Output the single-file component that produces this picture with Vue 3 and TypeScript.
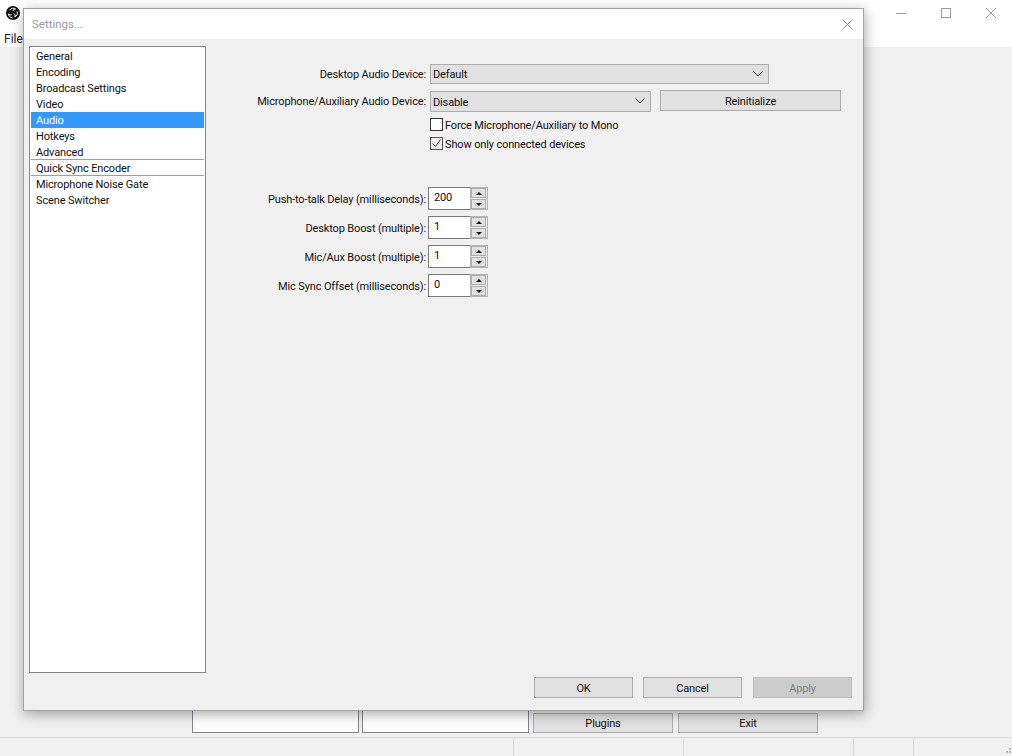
<script setup lang="ts">
const sections: { name: string; selected?: boolean; divider?: boolean }[] = [
  { name: 'General' },
  { name: 'Encoding' },
  { name: 'Broadcast Settings' },
  { name: 'Video' },
  { name: 'Audio', selected: true },
  { name: 'Hotkeys' },
  { name: 'Advanced', divider: true },
  { name: 'Quick Sync Encoder', divider: true },
  { name: 'Microphone Noise Gate' },
  { name: 'Scene Switcher' },
]
const spins = [
  { label: 'Push-to-talk Delay (milliseconds):', value: '200' },
  { label: 'Desktop Boost (multiple):', value: '1' },
  { label: 'Mic/Aux Boost (multiple):', value: '1' },
  { label: 'Mic Sync Offset (milliseconds):', value: '0' },
]
</script>

<template>
  <div class="window">
    <header class="main-head">
      <div class="titlebar">
        <svg class="logo" viewBox="0 0 14 14" width="14" height="14">
          <circle cx="7" cy="7" r="7" fill="#111" />
          <path d="M3.6 4.2C4.8 2 8 1.6 9.6 3 8.4 2.9 7.2 3.5 7 5" fill="none" stroke="#fff" stroke-width="1" />
          <path d="M11.2 5.4c.7 2.300-.4 4.700-2.400 5.400.6-1 .5-2.400-.7-3.200" fill="none" stroke="#fff" stroke-width="1" />
          <path d="M6.600 11.900c-2.400-.2-4.200-2.100-4.100-4.100.6.900 2 1.500 3.200.9" fill="none" stroke="#fff" stroke-width="1" />
        </svg>
        <div class="controls">
          <svg width="10" height="10" viewBox="0 0 10 10"><path d="M0 5.500h10" stroke="#999" fill="none" /></svg>
          <svg width="10" height="10" viewBox="0 0 10 10"><rect x=".5" y=".5" width="9" height="9" stroke="#999" fill="none" /></svg>
          <svg width="10" height="10" viewBox="0 0 10 10"><path d="M0 0l10 10M10 0L0 10" stroke="#999" fill="none" /></svg>
        </div>
      </div>
      <div class="menu">File</div>
    </header>

    <main class="main-body">
      <div class="main-actions">
        <div class="white-box"></div>
        <div class="white-box"></div>
        <button class="btn main-btn plugins">Plugins</button>
        <button class="btn main-btn">Exit</button>
      </div>
    </main>

    <footer class="status">
      <span class="cell c1"></span>
      <span class="cell c2"></span>
      <span class="cell c2"></span>
      <span class="cell c3"></span>
      <svg class="grip" width="8" height="8" viewBox="0 0 8 8" fill="#b5b5b5">
        <rect x="5" y="0" width="2" height="2" /><rect x="2" y="3" width="2" height="2" /><rect x="5" y="3" width="2" height="2" />
      </svg>
    </footer>

    <section class="dialog">
      <div class="dialog-title">
        <span>Settings...</span>
        <svg width="11" height="11" viewBox="0 0 11 11"><path d="M.5.5l10 10M10.500.5l-10 10" stroke="#888" fill="none" /></svg>
      </div>
      <div class="dialog-main">
        <ul class="sections">
          <li
            v-for="s in sections"
            :key="s.name"
            :class="{ selected: s.selected, divider: s.divider }"
          >{{ s.name }}</li>
        </ul>
        <div class="panel">
          <div class="form">
            <label class="row-label r1">Desktop Audio Device:</label>
            <div class="combo wide">Default<svg class="chev" width="10" height="6" viewBox="0 0 10 6"><path d="M.5.5L5 5 9.500.5" stroke="#444" fill="none" /></svg></div>

            <label class="row-label r2">Microphone/Auxiliary Audio Device:</label>
            <div class="mic-row">
              <div class="combo narrow">Disable<svg class="chev" width="10" height="6" viewBox="0 0 10 6"><path d="M.5.5L5 5 9.500.5" stroke="#444" fill="none" /></svg></div>
              <button class="btn reinit">Reinitialize</button>
            </div>

            <div class="checks">
              <div class="check"><span class="box"></span>Force Microphone/Auxiliary to Mono</div>
              <div class="check"><span class="box on"><svg width="11" height="11" viewBox="0 0 11 11"><path d="M1.500 5.500l3 3 5-7" stroke="#444" fill="none" /></svg></span>Show only connected devices</div>
            </div>
          </div>

          <div class="spins">
            <template v-for="s in spins" :key="s.label">
              <label class="spin-label">{{ s.label }}</label>
              <div class="spin">
                <span class="spin-value">{{ s.value }}</span>
                <span class="spin-btns">
                  <span class="arrow"><i class="up"></i></span>
                  <span class="arrow"><i class="down"></i></span>
                </span>
              </div>
            </template>
          </div>

          <div class="dialog-actions">
            <button class="btn act">OK</button>
            <button class="btn act">Cancel</button>
            <button class="btn act disabled">Apply</button>
          </div>
        </div>
      </div>
    </section>
  </div>
</template>

<style>
html, body { margin: 0; background: #f0f0f0; }
</style>

<style scoped>
.window {
  position: relative;
  width: 1012px;
  height: 756px;
  overflow: hidden;
  display: flex;
  flex-direction: column;
  background: #f0f0f0;
  font-family: Roboto, "Open Sans", sans-serif;
  font-size: 11px;
  letter-spacing: -0.14px;
  color: #111;
}
.main-head { background: #fff; height: 47px; flex: none; }
.titlebar { height: 31px; display: flex; align-items: flex-start; padding: 6px 16px 0 6px; box-sizing: border-box; }
.logo { display: block; }
.controls { margin-left: auto; display: flex; gap: 35px; padding-top: 2px; }
.controls svg { display: block; }
.menu { padding-left: 4px; line-height: 17px; font-size: 12px; color: #222; letter-spacing: 0; }
.main-body { flex: 1; display: flex; flex-direction: column; justify-content: flex-end; padding-bottom: 4px; }
.main-actions { display: flex; padding-left: 192px; height: 23px; align-items: flex-end; }
.white-box {
  width: 167px; height: 40px; box-sizing: border-box; background: #fff;
  border: 1px solid #84848c; margin-right: 3px; flex: none; align-self: flex-end;
}
.btn {
  display: block; margin: 0; padding: 0; font: inherit; letter-spacing: inherit; color: #111; text-align: center;
  background: #e1e1e1; border: 1px solid #adadad; box-sizing: border-box;
}
.main-btn { width: 140px; height: 20px; line-height: 17px; flex: none; }
.plugins { margin-left: 1px; margin-right: 5px; }
.status {
  position: relative; flex: none; height: 19px; box-sizing: border-box;
  border-top: 1px solid #d9d9d9; display: flex; padding-top: 1px;
}
.cell { display: block; border-right: 1px solid #d9d9d9; flex: none; box-sizing: border-box; }
.c1 { width: 514px; } .c2 { width: 170px; } .c3 { width: 60px; }
.grip { position: absolute; right: 0; bottom: 0; }

.dialog {
  position: absolute; left: 23px; top: 8px; width: 841px; height: 703px;
  box-sizing: border-box; border: 1px solid #a3a3a3; background: #f0f0f0;
  box-shadow: 1px 3px 12px rgba(0, 0, 0, .35);
  display: flex; flex-direction: column;
}
.dialog-title {
  height: 30px; flex: none; background: #fff; display: flex; align-items: center;
  justify-content: space-between; padding: 0 10px 0 8px; color: #999;
}
.dialog-title svg { display: block; margin-top: 1px; }
.dialog-title span { font-size: 11.5px; letter-spacing: 0; }
.dialog-main { flex: 1; display: flex; min-height: 0; padding: 7px 0 0 5px; }
.sections {
  list-style: none; margin: 0; padding: 1px; width: 177px; height: 627px;
  box-sizing: border-box; background: #fff; border: 1px solid #84848c; flex: none;
}
.sections li { height: 16px; line-height: 18px; padding-left: 5px; box-sizing: border-box; }
.sections li.selected { background: #3399ff; color: #fff; }
.sections li.divider { box-shadow: inset 0 -1px 0 #a0a0a0; }
.panel { flex: 1; position: relative; display: flex; flex-direction: column; min-width: 0; }

.form {
  display: grid; grid-template-columns: 220px auto; column-gap: 4px; align-items: center;
  padding-top: 18px;
}
.row-label { text-align: right; white-space: nowrap; }
.r1 { height: 20px; line-height: 22px; }
.r2 { height: 22px; line-height: 24px; margin-top: 6px; }
.combo {
  height: 20px; line-height: 20px; box-sizing: border-box; background: #e1e1e1;
  border: 1px solid #adadad; padding-left: 2px; position: relative;
}
.chev { position: absolute; right: 5px; top: 6px; }
.wide { width: 339px; }
.narrow { width: 221px; height: 21px; line-height: 21px; flex: none; }
.mic-row { display: flex; gap: 9px; margin-top: 6px; align-items: flex-start; }
.reinit { width: 181px; height: 21px; margin-top: -1px; padding-top: 2px; }
.checks { grid-column: 2; padding-top: 6px; display: flex; flex-direction: column; gap: 6px; }
.check { display: flex; align-items: flex-start; gap: 2px; height: 13px; line-height: 15px; white-space: nowrap; }
.box {
  width: 13px; height: 13px; box-sizing: border-box; border: 1px solid #333;
  background: #fff; flex: none; display: block;
}
.box svg { display: block; }
.box.on { background: #ececec; border-color: #555; }

.spins {
  display: grid; grid-template-columns: 220px 60px; column-gap: 2px;
  row-gap: 6px; align-items: center; margin-top: 37px;
}
.spin-label { text-align: right; white-space: nowrap; padding-top: 2px; }
.spin { height: 23px; display: flex; box-sizing: border-box; }
.spin-value {
  flex: 1; box-sizing: border-box; background: #fff; padding-left: 5px; line-height: 19px;
  border: 1px solid #7a7a7a; border-right: 0;
}
.spin-btns {
  width: 18px; box-sizing: border-box; padding: 0 1px 0 0; display: flex; flex-direction: column; gap: 1px;
  justify-content: center; border: 1px solid #b4b4b4; background: #f0f0f0;
}
.arrow {
  flex: 1; background: #e1e1e1; border: 1px solid #adadad; box-sizing: border-box;
  display: flex; align-items: center; justify-content: center;
}
.arrow i { display: block; width: 0; height: 0; border-left: 3.5px solid transparent; border-right: 3.5px solid transparent; }
.arrow .up { border-bottom: 3px solid #111; }
.arrow .down { border-top: 3px solid #111; }

.dialog-actions {
  position: absolute; right: 11px; bottom: 12px; display: flex; gap: 10px;
}
.act { width: 99px; height: 21px; padding-top: 2px; }
.disabled { background: #cccccc; border-color: #bfbfbf; color: #838383; margin-left: 1px; }
</style>
